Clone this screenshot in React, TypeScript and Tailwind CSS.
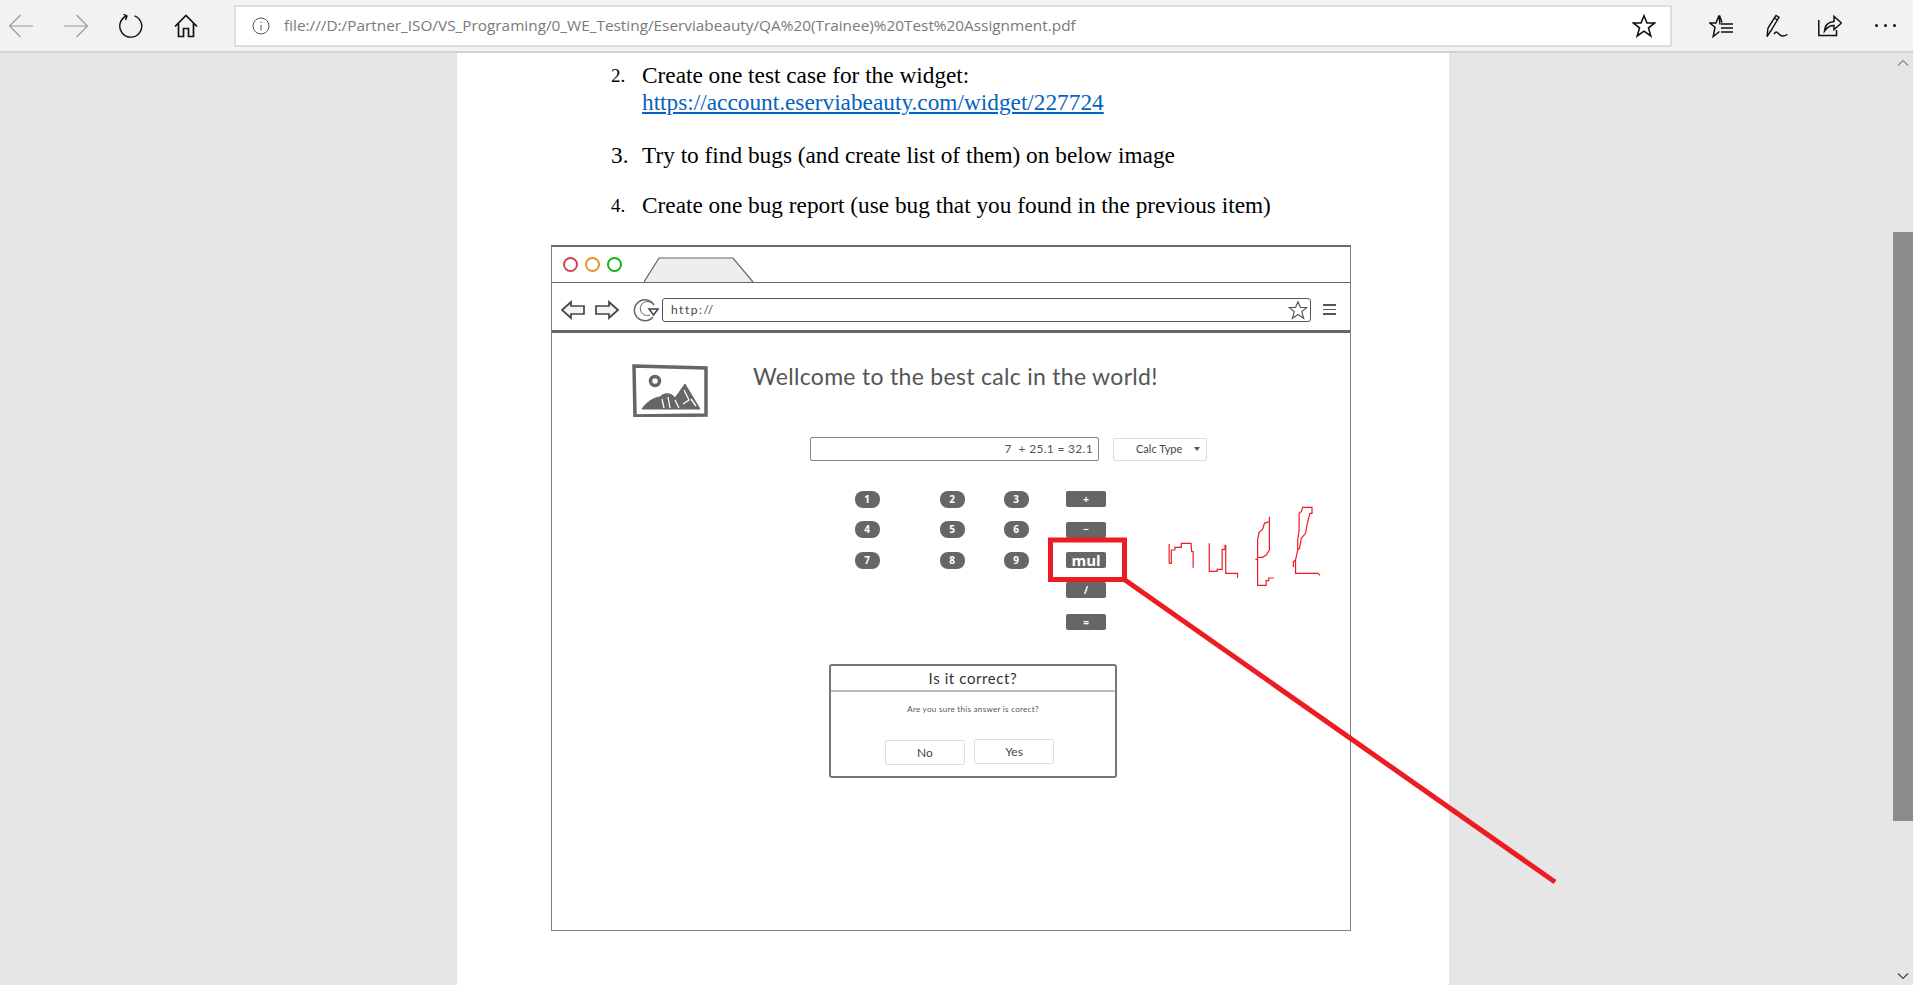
import { ReactNode } from "react";

const handFont = "font-['Lato',sans-serif]";

function BackIcon({ flip }: { flip?: boolean }) {
    return (
        <svg width="24" height="24" viewBox="0 0 24 24" fill="none" stroke="#9a9a9a" strokeWidth="1.2" className={flip ? "-scale-x-100" : ""}>
            <path d="M0.5 12H24M11.5 1L0.5 12L11.5 23" />
        </svg>
    );
}

function ToolbarIcons() {
    return (
        <div className="flex items-center">
            <div className="ml-[9px]"><BackIcon /></div>
            <div className="ml-[31px]"><BackIcon flip /></div>
            <svg className="ml-[31px]" width="24" height="24" viewBox="0 0 24 24" fill="none" stroke="#111" strokeWidth="1.4">
                <path d="M15.5 1.8A11 11 0 1 1 7.5 2" />
                <path d="M4.5 0.2L8 2.1L6.5 6" />
            </svg>
            <svg className="ml-[31px]" width="24" height="24" viewBox="0 0 24 24" fill="none" stroke="#111" strokeWidth="1.7">
                <path d="M1 12.5L12 1.5L23 12.5M4.5 9.5V22.5H9.5V14.5H14.5V22.5H19.5V9.5" />
            </svg>
        </div>
    );
}

function FavoritesStar({ size }: { size: number }) {
    return (
        <svg width={size} height={size} viewBox="0 0 24 24" fill="none" stroke="#111" strokeWidth="1.6" strokeLinejoin="miter">
            <path d="M12 1.8L15 9H22.8L16.5 13.9L18.8 22L12 17.2L5.2 22L7.5 13.9L1.2 9H9Z" />
        </svg>
    );
}

function HubIcon() {
    return (
        <svg width="24" height="24" viewBox="0 0 24 24" fill="none" stroke="#111" strokeWidth="1.5">
            <path d="M11 10.5L10 1.5L7 9H0.8L6 13.2L4.2 22.5L10.5 17.5" />
            <path d="M10.5 1.5L13 8.5" />
            <path d="M12 10H24M12 14H24M12 18H24" />
        </svg>
    );
}

function PenIcon() {
    return (
        <svg width="24" height="24" viewBox="0 0 24 24" fill="none" stroke="#111" strokeWidth="1.4">
            <path d="M2 22.5L3 14L11 1.5L14 3.3L6 16.5L2 22.5Z" />
            <path d="M9.5 4L12.5 6" />
            <path d="M9 20C11 17 12 17.5 14 20C16 22.5 19 22.5 22.5 20.5" />
        </svg>
    );
}

function ShareIcon() {
    return (
        <svg width="24" height="24" viewBox="0 0 24 24" fill="none" stroke="#111" strokeWidth="1.5">
            <path d="M0.8 6V21.5H18.5V16" />
            <path d="M6.5 17C7 11 10 8 16 7.5V2.5L23.5 9L16 15.5V11.5C11.5 11.3 9 13.5 6.5 17Z" />
        </svg>
    );
}

function PictureIcon() {
    return (
        <svg width="76" height="53" viewBox="0 0 76 53" fill="none" stroke="#666">
            <path d="M2 2L74 4L74 51L3 52Z" strokeWidth="3.5" />
            <circle cx="23" cy="17" r="4.5" strokeWidth="3.5" fill="#fff" />
            <path d="M10 45C15 37 24 33 28 33C32 28 40 29 43 34L53 20L68 45Z" fill="#666" strokeWidth="1" />
            <path d="M30 35L32 44M36 33L38 44M43 36L47 44M52 26L57 36L51 40M59 35L64 42" stroke="#fff" strokeWidth="1.3" />
        </svg>
    );
}

function SketchArrow({ flip }: { flip?: boolean }) {
    return (
        <svg width="24" height="20" viewBox="0 0 24 20" fill="#f4f4f4" stroke="#444" strokeWidth="1.7" className={flip ? "-scale-x-100" : ""}>
            <path d="M1 10L10 2V6H23V14H10V18Z" />
        </svg>
    );
}

function ReloadSketch() {
    return (
        <svg width="26" height="26" viewBox="0 0 26 26" fill="none" stroke="#666" strokeWidth="1.5">
            <path d="M21 8A10.5 10.5 0 1 0 20 20" />
            <path d="M18.5 6A7 7 0 1 0 17 18" strokeWidth="1" />
            <path d="M16 12H25L20.5 18Z" fill="#fff" stroke="#444" />
        </svg>
    );
}

function Key({ round, bold, children }: { round?: boolean; bold?: boolean; children: ReactNode }) {
    return (
        <div
            className={`bg-[#666666] text-white flex items-center justify-center font-['Open_Sans',sans-serif] ${round ? "w-[25px] h-[17px] rounded-[8px] text-[10px] font-bold" : "w-[40px] h-[16px] rounded-[2px] text-[10px] font-bold"
                } ${bold ? "!text-[15px] !leading-none" : ""}`}
        >
            {children}
        </div>
    );
}

function Wireframe() {
    return (
        <div className="relative w-[800px] h-[686px] border border-[#808080] border-t-2 border-t-[#6b6b6b] bg-white flex flex-col shrink-0">
            {/* window chrome */}
            <div className="h-[36px] flex items-center pl-[11px] gap-[7px] border-b-[1.5px] border-[#666] shrink-0">
                <span className="w-[15px] h-[15px] rounded-full border-2 border-[#d0444c]" />
                <span className="w-[15px] h-[15px] rounded-full border-2 border-[#e8912d]" />
                <span className="w-[15px] h-[15px] rounded-full border-2 border-[#12b312]" />
                <svg className="ml-[15px] self-end -mb-[1px]" width="110" height="26" viewBox="0 0 110 26" fill="#eeeeee" stroke="#666" strokeWidth="1.2">
                    <path d="M0 25L15 1H89L109 25" />
                </svg>
            </div>
            {/* nav bar */}
            <div className="h-[50px] flex items-center pl-[9px] pt-[6px] border-b-[3px] border-[#666] shrink-0">
                <SketchArrow />
                <div className="ml-[10px]"><SketchArrow flip /></div>
                <div className="ml-[14px]"><ReloadSketch /></div>
                <div className="ml-[3px] w-[649px] h-[24px] border border-[#555] rounded-[3px] flex items-center pl-[8px] pr-[2px] justify-between">
                    <span className={`${handFont} text-[12px] text-[#444] tracking-[1.5px]`}>http://</span>
                    <svg width="20" height="20" viewBox="0 0 24 24" fill="none" stroke="#555" strokeWidth="1.4">
                        <path d="M12 2L15 9H22.5L16.5 14L18.8 22L12 17.4L5.2 22L7.5 14L1.5 9H9Z" />
                    </svg>
                </div>
                <div className="ml-[12px] w-[13px] flex flex-col gap-[3px]">
                    <span className="h-[1.5px] bg-[#555]" />
                    <span className="h-[1.5px] bg-[#555]" />
                    <span className="h-[1.5px] bg-[#555]" />
                </div>
            </div>
            {/* page header */}
            <div className="mt-[31px] ml-[80px] flex items-start">
                <PictureIcon />
                <h2 className={`${handFont} ml-[45px] -mt-[3px] text-[23px] leading-[30px] text-[#555] tracking-[0.3px] whitespace-nowrap`}>
                    Wellcome to the best calc in the world!
                </h2>
            </div>
            {/* display + type */}
            <div className="mt-[20px] ml-[258px] flex items-center gap-[14px]">
                <div className={`${handFont} w-[289px] h-[24px] border border-[#888] rounded-[2px] flex items-center justify-end pr-[5px] text-[12px] text-[#555] tracking-[0.3px]`}>
                    7 &nbsp;+ 25.1 = 32.1
                </div>
                <div className={`${handFont} w-[94px] h-[23px] border border-[#ddd] rounded-[2px] flex items-center pl-[22px] text-[11px] text-[#444]`}>
                    Calc Type
                    <span className="ml-[12px] w-0 h-0 border-x-[3px] border-x-transparent border-t-[4px] border-t-[#555]" />
                </div>
            </div>
            {/* keypad */}
            <div className="mt-[23px] ml-[273px] grid grid-cols-[84px_86px_42px_98px] grid-rows-[30px_31px_30px_30px_34px] place-items-center">
                <Key round>1</Key><Key round>2</Key><Key round>3</Key><Key>+</Key>
                <Key round>4</Key><Key round>5</Key><Key round>6</Key><Key>−</Key>
                <Key round>7</Key><Key round>8</Key><Key round>9</Key><Key bold>mul</Key>
                <span /><span /><span /><Key>/</Key>
                <span /><span /><span /><Key>=</Key>
            </div>
            {/* confirm dialog */}
            <div className={`${handFont} mt-[25px] ml-[277px] w-[288px] h-[114px] border-2 border-[#777] rounded-[3px] flex flex-col`}>
                <div className="h-[26px] border-b-2 border-[#bbb] flex items-center justify-center text-[15px] text-[#333] tracking-[0.6px] shrink-0">
                    Is it correct?
                </div>
                <div className="mt-[12px] text-center text-[8px] leading-[10px] text-[#555] tracking-[0.3px]">
                    Are you sure this answer is corect?
                </div>
                <div className="mt-[26px] ml-[54px] flex gap-[9px] text-[12px] text-[#444]">
                    <div className="w-[80px] h-[25px] border border-[#ddd] rounded-[2px] flex items-center justify-center">No</div>
                    <div className="w-[80px] h-[25px] border border-[#ddd] rounded-[2px] flex items-center justify-center -mt-[1px]">Yes</div>
                </div>
            </div>
            {/* red marks somebody drew over the image */}
            <svg className="absolute -left-[1px] -top-[2px] overflow-visible pointer-events-none" width="800" height="686" viewBox="551 245 800 686" fill="none">
                <rect x="1050.5" y="540" width="74" height="39.5" stroke="#ed1c24" strokeWidth="5" />
                <path d="M1125 580L1555 882" stroke="#ed1c24" strokeWidth="5" />
                <g transform="translate(799 470) scale(0.358 0.3333)" stroke="#ed1c24" strokeWidth="1.2">
                    <path vectorEffect="non-scaling-stroke" d="M1034 280V222M1034 280H1040V240H1050V232H1068V220H1095L1097 245H1101V293" />
                    <path vectorEffect="non-scaling-stroke" d="M1146 220V304H1168V298H1182V238H1190V226H1192V310H1225V323" />
                    <path vectorEffect="non-scaling-stroke" d="M1275 268H1281V346H1305V332H1312V324H1326M1281 268V210L1285 188L1295 178L1300 160L1314 155V140V240L1305 255L1295 262H1281" />
                    <path vectorEffect="non-scaling-stroke" d="M1455 316L1450 310H1387V270L1381 275V292M1387 270L1393 240L1398 235L1403 205L1415 190L1420 160L1427 130H1433V112H1407L1403 125L1397 130V180L1393 210V240" />
                </g>
            </svg>
        </div>
    );
}

export default function App() {
    return (
        <div className="w-full h-screen overflow-hidden flex flex-col bg-[#e6e6e6]">
            <header className="h-[53px] shrink-0 bg-[#f2f2f2] border-b-2 border-[#d2d2d2] flex items-center">
                <ToolbarIcons />
                <div className="ml-[36px] w-[1438px] h-[42px] bg-white border-2 border-[#dedede] flex items-center font-['Open_Sans',sans-serif] shrink-0">
                    <svg className="ml-[16px]" width="18" height="18" viewBox="0 0 18 18" fill="none" stroke="#555" strokeWidth="1">
                        <circle cx="9" cy="9" r="8" />
                        <path d="M9 8V13.5M9 4.6V6" />
                    </svg>
                    <span className="ml-[14px] text-[15.35px] text-[#7a7a7a] whitespace-nowrap">
                        file:///D:/Partner_ISO/VS_Programing/0_WE_Testing/Eserviabeauty/QA%20(Trainee)%20Test%20Assignment.pdf
                    </span>
                    <div className="ml-auto mr-[14px] flex"><FavoritesStar size={24} /></div>
                </div>
                <div className="ml-[37px]"><HubIcon /></div>
                <div className="ml-[32px]"><PenIcon /></div>
                <div className="ml-[29px]"><ShareIcon /></div>
                <div className="ml-[33px] flex gap-[6px]">
                    <span className="w-[3px] h-[3px] rounded-full bg-[#111]" />
                    <span className="w-[3px] h-[3px] rounded-full bg-[#111]" />
                    <span className="w-[3px] h-[3px] rounded-full bg-[#111]" />
                </div>
            </header>
            <main className="flex-1 min-h-0 flex">
                <div className="w-[457px] shrink-0" />
                <div className="w-[992px] shrink-0 bg-white pt-[9px] pl-[94px] font-['Liberation_Serif',serif] text-black">
                    <div className="flex pl-[60px]">
                        <span className="w-[31px] text-[19px] leading-[27px]">2.</span>
                        <div className="text-[23.3px] leading-[27px]">
                            <div>Create one test case for the widget:</div>
                            <a className="text-[#0563c1] underline">https://account.eserviabeauty.com/widget/227724</a>
                        </div>
                    </div>
                    <div className="flex pl-[60px] mt-[26px]">
                        <span className="w-[31px] text-[23.3px] leading-[27px]">3.</span>
                        <div className="text-[23.3px] leading-[27px]">Try to find bugs (and create list of them) on below image</div>
                    </div>
                    <div className="flex pl-[60px] mt-[23px]">
                        <span className="w-[31px] text-[19px] leading-[27px]">4.</span>
                        <div className="text-[23.3px] leading-[27px]">Create one bug report (use bug that you found in the previous item)</div>
                    </div>
                    <div className="mt-[26px]">
                        <Wireframe />
                    </div>
                </div>
                <div className="flex-1" />
                <div className="w-[20px] shrink-0 flex flex-col items-center pt-[6px] pb-[5px]">
                    <svg width="12" height="7" viewBox="0 0 12 7" fill="none" stroke="#8c8c8c" strokeWidth="1.2">
                        <path d="M1 6.5L6 1.5L11 6.5" />
                    </svg>
                    <div className="mt-[166px] w-full h-[589px] bg-[#8c8c8c]" />
                    <svg className="mt-auto" width="12" height="7" viewBox="0 0 12 7" fill="none" stroke="#444" strokeWidth="1.2">
                        <path d="M1 0.5L6 5.5L11 0.5" />
                    </svg>
                </div>
            </main>
        </div>
    );
}
